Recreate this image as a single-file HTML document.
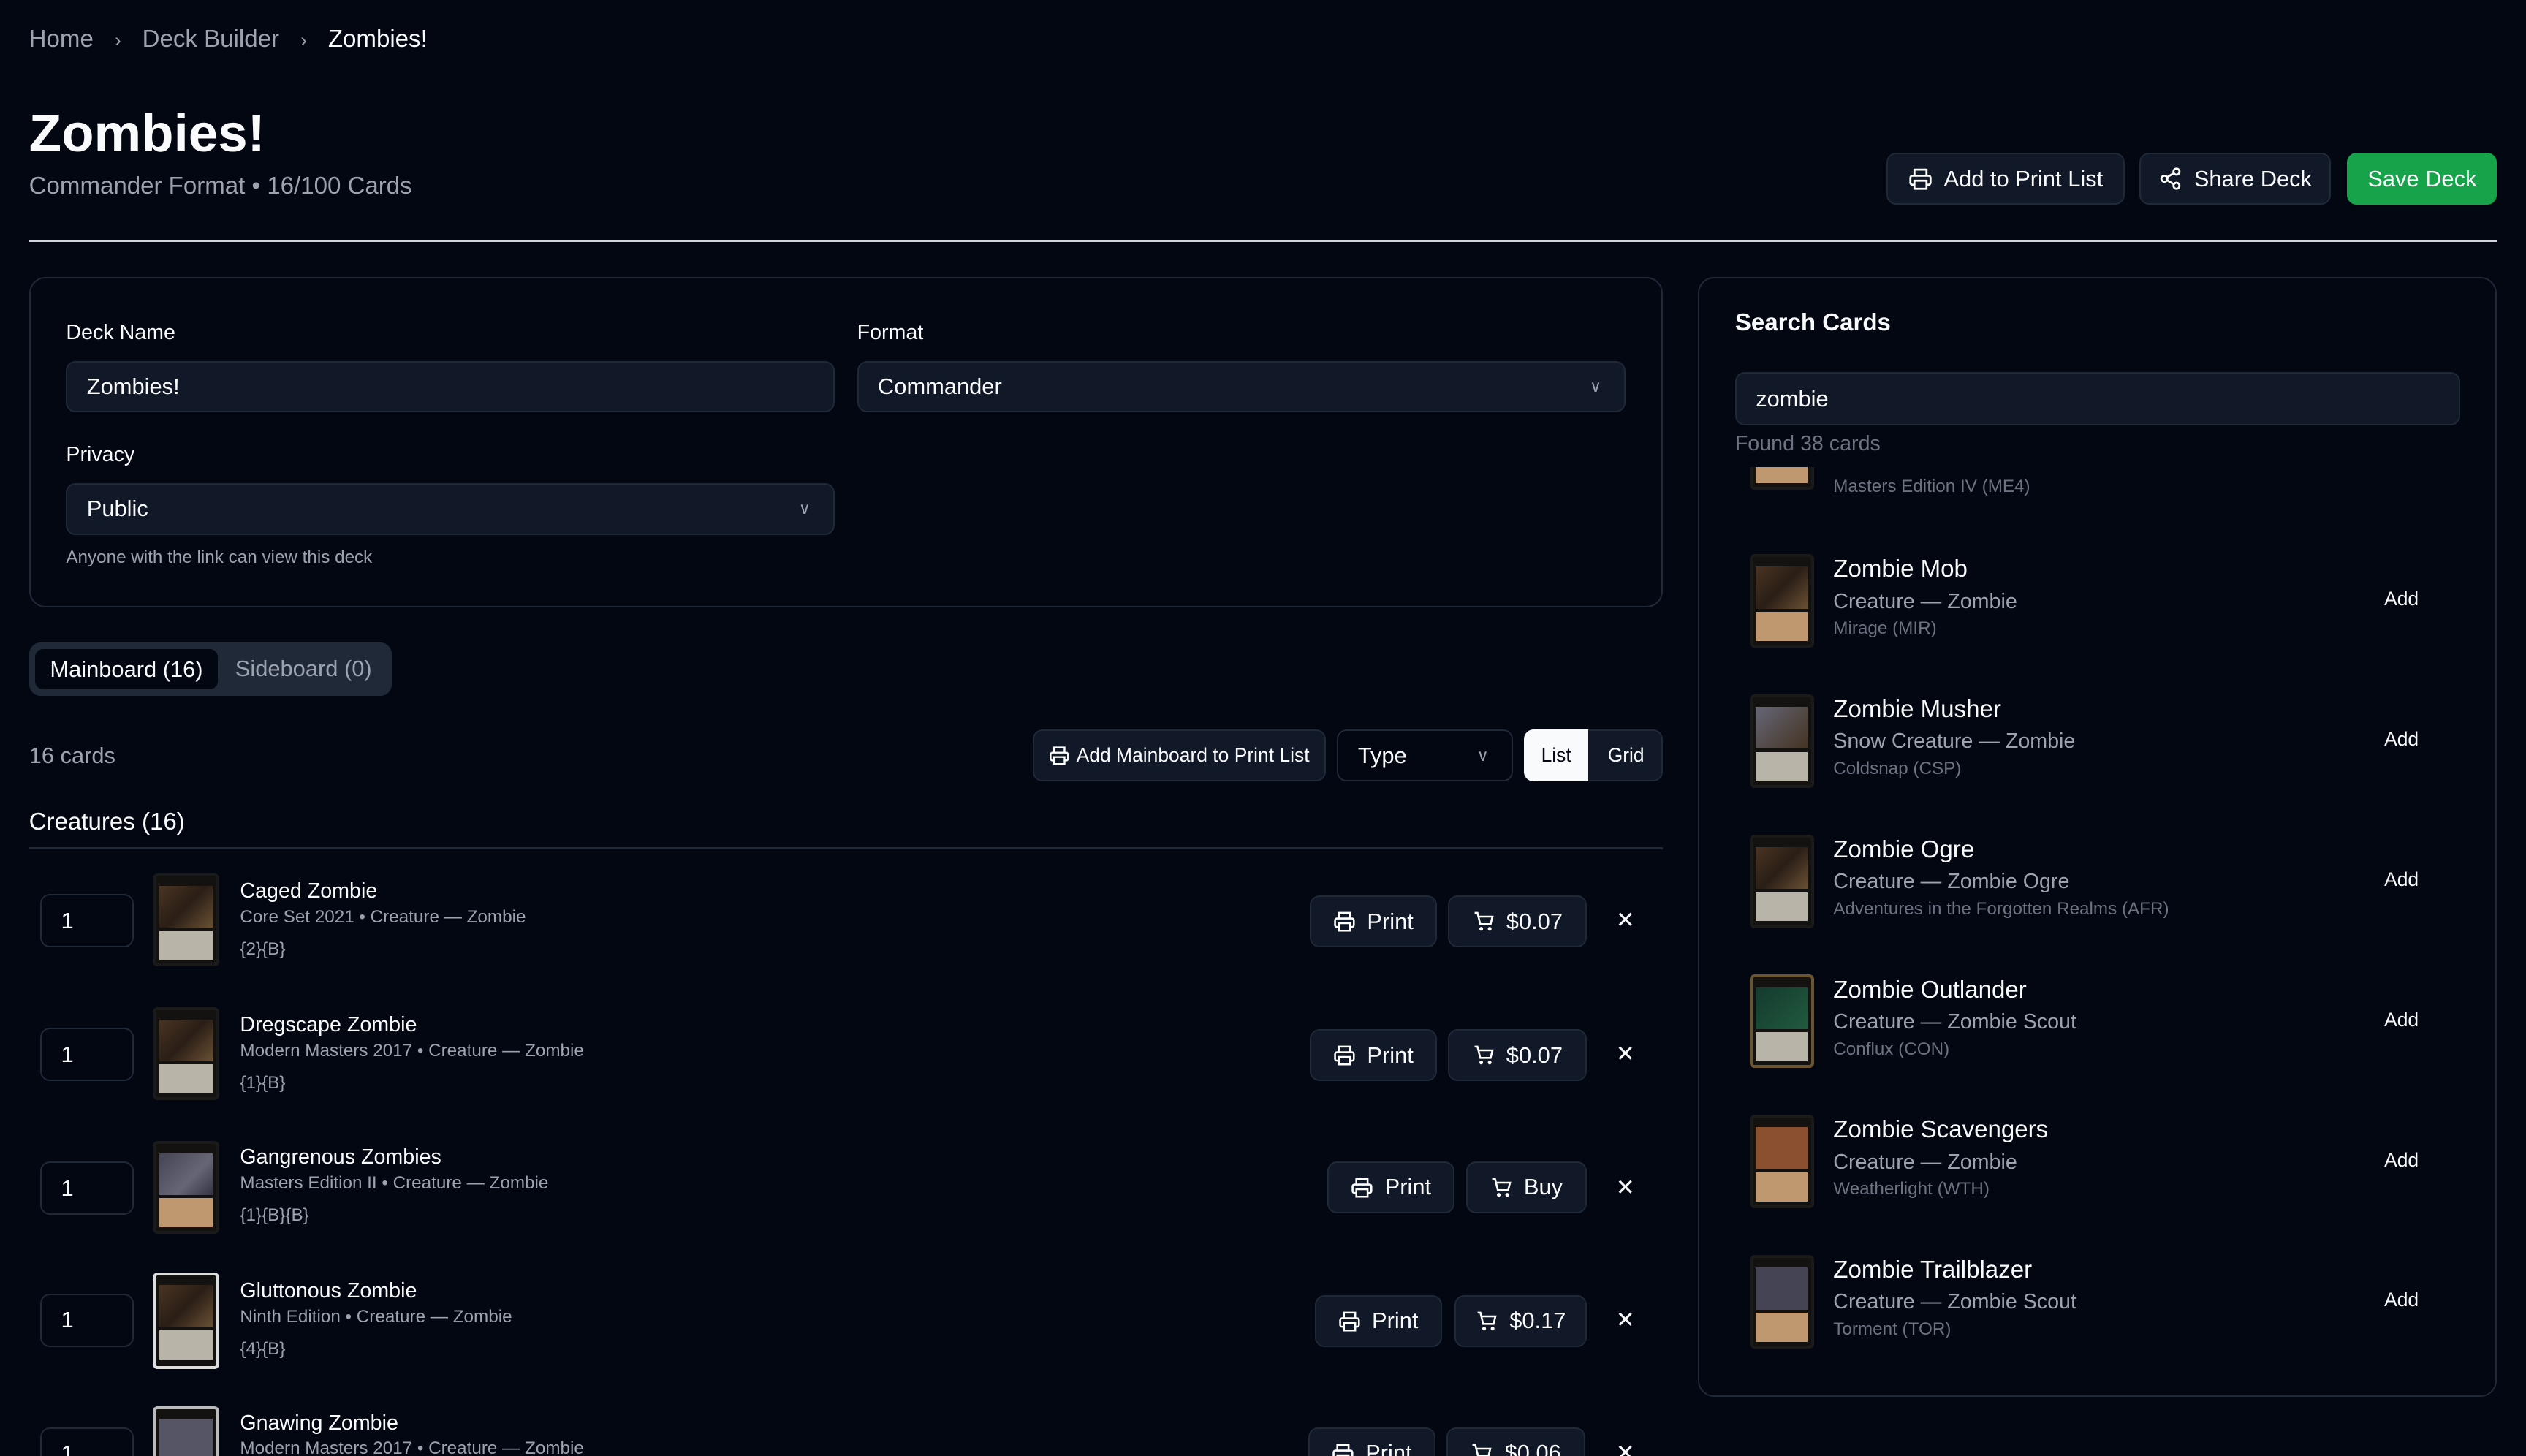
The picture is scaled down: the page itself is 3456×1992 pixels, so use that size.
<!DOCTYPE html>
<html><head><meta charset="utf-8"><style>
*{box-sizing:border-box;margin:0;padding:0}
html,body{width:3456px;height:1992px;overflow:hidden;background:#030712}
#w{zoom:2.2041;width:1568px;height:904px;position:relative;font-family:"Liberation Sans",sans-serif;color:#f9fafb;overflow:hidden}
.a{position:absolute;white-space:nowrap}
.g{color:#9ca3af}
.btn{position:absolute;background:#111827;border:1px solid #1f2937;border-radius:6px;display:flex;align-items:center;justify-content:center;gap:7px;font-size:14px;color:#f9fafb}
.inp{position:absolute;background:#111827;border:1px solid #1f2937;border-radius:6px;font-size:14px;padding-left:12px;display:flex;align-items:center}
.lbl{position:absolute;font-size:13px}
.card{position:absolute;width:41px;height:58px;border-radius:3px;background:#141210;border:2px solid #1a1a1a;overflow:hidden}
.card i{position:absolute;left:2px;right:2px;top:6px;height:26px;background:linear-gradient(135deg,#4a3422,#2a1e16 50%,#6a5034)}
.card b{position:absolute;left:2px;right:2px;top:34px;height:18px;background:#b8b4a8}
svg{flex:none}
</style></head><body><div id="w">
<div class="a g" style="left:18px;top:16px;font-size:15px">Home <span style="margin:0 9px;font-size:12px">›</span> Deck Builder <span style="margin:0 9px;font-size:12px">›</span> <span style="color:#f9fafb">Zombies!</span></div>
<div class="a" style="left:18px;top:64px;font-size:33px;font-weight:bold">Zombies!</div>
<div class="a g" style="left:18px;top:107px;font-size:15px">Commander Format • 16/100 Cards</div>
<div class="btn" style="left:1171px;top:95px;width:148px;height:32px"><svg width="15" height="15" viewBox="0 0 24 24" fill="none" stroke="#fff" stroke-width="2"><path d="M6 9V3h12v6M6 18H4a2 2 0 01-2-2v-5a2 2 0 012-2h16a2 2 0 012 2v5a2 2 0 01-2 2h-2M6 14h12v8H6z"/></svg>Add to Print List</div>
<div class="btn" style="left:1328px;top:95px;width:119px;height:32px"><svg width="15" height="15" viewBox="0 0 24 24" fill="none" stroke="#fff" stroke-width="2"><circle cx="18" cy="5" r="3"/><circle cx="6" cy="12" r="3"/><circle cx="18" cy="19" r="3"/><path d="M8.6 13.5l6.8 4M15.4 6.5l-6.8 4"/></svg>Share Deck</div>
<div class="btn" style="left:1457px;top:95px;width:93px;height:32px;background:#16a34a;border-color:#16a34a">Save Deck</div>
<div class="a" style="left:18px;top:149px;width:1532px;height:1px;background:#d1d5db"></div>

<div class="a" style="left:18px;top:172px;width:1014px;height:205px;border:1px solid #1f2937;border-radius:10px"></div>
<div class="lbl" style="left:41px;top:199px">Deck Name</div>
<div class="inp" style="left:41px;top:224px;width:477px;height:32px">Zombies!</div>
<div class="lbl" style="left:532px;top:199px">Format</div>
<div class="inp" style="left:532px;top:224px;width:477px;height:32px">Commander<span style="position:absolute;right:14px;font-size:10px;color:#9ca3af">∨</span></div>
<div class="lbl" style="left:41px;top:275px">Privacy</div>
<div class="inp" style="left:41px;top:300px;width:477px;height:32px">Public<span style="position:absolute;right:14px;font-size:10px;color:#9ca3af">∨</span></div>
<div class="a g" style="left:41px;top:340px;font-size:11px">Anyone with the link can view this deck</div>

<div class="a" style="left:18px;top:399px;width:225px;height:33px;background:#1f2937;border-radius:7px"></div>
<div class="a" style="left:22px;top:403px;width:113px;height:25px;background:#030712;border-radius:5px;font-size:14px;display:flex;align-items:center;justify-content:center">Mainboard (16)</div>
<div class="a g" style="left:146px;top:407px;font-size:14px">Sideboard (0)</div>

<div class="a g" style="left:18px;top:461px;font-size:14px">16 cards</div>
<div class="btn" style="left:641px;top:453px;width:182px;height:32px;font-size:12px;gap:4px"><svg width="13" height="13" viewBox="0 0 24 24" fill="none" stroke="#fff" stroke-width="2"><path d="M6 9V3h12v6M6 18H4a2 2 0 01-2-2v-5a2 2 0 012-2h16a2 2 0 012 2v5a2 2 0 01-2 2h-2M6 14h12v8H6z"/></svg>Add Mainboard to Print List</div>
<div class="inp" style="left:830px;top:453px;width:109px;height:32px;background:#030712">Type<span style="position:absolute;right:14px;font-size:10px;color:#9ca3af">∨</span></div>
<div class="a" style="left:946px;top:453px;width:86px;height:32px;border:1px solid #1f2937;border-radius:6px;background:#111827"></div>
<div class="a" style="left:946px;top:453px;width:40px;height:32px;background:#f9fafb;color:#030712;border-radius:6px 0 0 6px;font-size:12px;display:flex;align-items:center;justify-content:center">List</div>
<div class="a" style="left:998px;top:462px;font-size:12px">Grid</div>

<div class="a" style="left:18px;top:502px;font-size:15px">Creatures (16)</div>
<div class="a" style="left:18px;top:526px;width:1014px;height:1px;background:#1f2937"></div>

<div class="inp" style="left:25px;top:555px;width:58px;height:33px;background:#030712">1</div>
<div class="card" style="left:95px;top:542px"><i></i><b></b></div>
<div class="a" style="left:149px;top:546px;font-size:13px">Caged Zombie</div>
<div class="a g" style="left:149px;top:563px;font-size:11px">Core Set 2021 • Creature — Zombie</div>
<div class="a g" style="left:149px;top:583px;font-size:11px">{2}{B}</div>
<div class="btn" style="left:813px;top:556px;width:79px;height:32px"><svg width="14" height="14" viewBox="0 0 24 24" fill="none" stroke="#fff" stroke-width="2"><path d="M6 9V3h12v6M6 18H4a2 2 0 01-2-2v-5a2 2 0 012-2h16a2 2 0 012 2v5a2 2 0 01-2 2h-2M6 14h12v8H6z"/></svg>Print</div>
<div class="btn" style="left:899px;top:556px;width:86px;height:32px"><svg width="14" height="14" viewBox="0 0 24 24" fill="none" stroke="#fff" stroke-width="2"><path d="M2 3h3l3 12h11l2-8H6"/><circle cx="9" cy="20" r="1"/><circle cx="18" cy="20" r="1"/></svg>$0.07</div>
<div class="a" style="left:1003px;top:563px;font-size:14px">✕</div>

<div class="inp" style="left:25px;top:638px;width:58px;height:33px;background:#030712">1</div>
<div class="card" style="left:95px;top:625px"><i></i><b></b></div>
<div class="a" style="left:149px;top:629px;font-size:13px">Dregscape Zombie</div>
<div class="a g" style="left:149px;top:646px;font-size:11px">Modern Masters 2017 • Creature — Zombie</div>
<div class="a g" style="left:149px;top:666px;font-size:11px">{1}{B}</div>
<div class="btn" style="left:813px;top:639px;width:79px;height:32px"><svg width="14" height="14" viewBox="0 0 24 24" fill="none" stroke="#fff" stroke-width="2"><path d="M6 9V3h12v6M6 18H4a2 2 0 01-2-2v-5a2 2 0 012-2h16a2 2 0 012 2v5a2 2 0 01-2 2h-2M6 14h12v8H6z"/></svg>Print</div>
<div class="btn" style="left:899px;top:639px;width:86px;height:32px"><svg width="14" height="14" viewBox="0 0 24 24" fill="none" stroke="#fff" stroke-width="2"><path d="M2 3h3l3 12h11l2-8H6"/><circle cx="9" cy="20" r="1"/><circle cx="18" cy="20" r="1"/></svg>$0.07</div>
<div class="a" style="left:1003px;top:646px;font-size:14px">✕</div>

<div class="inp" style="left:25px;top:721px;width:58px;height:33px;background:#030712">1</div>
<div class="card" style="left:95px;top:708px"><i style="background:linear-gradient(135deg,#445,#667 60%,#334)"></i><b style="background:#c09870"></b></div>
<div class="a" style="left:149px;top:711px;font-size:13px">Gangrenous Zombies</div>
<div class="a g" style="left:149px;top:728px;font-size:11px">Masters Edition II • Creature — Zombie</div>
<div class="a g" style="left:149px;top:748px;font-size:11px">{1}{B}{B}</div>
<div class="btn" style="left:824px;top:721px;width:79px;height:32px"><svg width="14" height="14" viewBox="0 0 24 24" fill="none" stroke="#fff" stroke-width="2"><path d="M6 9V3h12v6M6 18H4a2 2 0 01-2-2v-5a2 2 0 012-2h16a2 2 0 012 2v5a2 2 0 01-2 2h-2M6 14h12v8H6z"/></svg>Print</div>
<div class="btn" style="left:910px;top:721px;width:75px;height:32px"><svg width="14" height="14" viewBox="0 0 24 24" fill="none" stroke="#fff" stroke-width="2"><path d="M2 3h3l3 12h11l2-8H6"/><circle cx="9" cy="20" r="1"/><circle cx="18" cy="20" r="1"/></svg>Buy</div>
<div class="a" style="left:1003px;top:729px;font-size:14px">✕</div>

<div class="inp" style="left:25px;top:803px;width:58px;height:33px;background:#030712">1</div>
<div class="card" style="left:95px;top:790px;border-color:#ddd;height:60px"><i></i><b></b></div>
<div class="a" style="left:149px;top:794px;font-size:13px">Gluttonous Zombie</div>
<div class="a g" style="left:149px;top:811px;font-size:11px">Ninth Edition • Creature — Zombie</div>
<div class="a g" style="left:149px;top:831px;font-size:11px">{4}{B}</div>
<div class="btn" style="left:816px;top:804px;width:79px;height:32px"><svg width="14" height="14" viewBox="0 0 24 24" fill="none" stroke="#fff" stroke-width="2"><path d="M6 9V3h12v6M6 18H4a2 2 0 01-2-2v-5a2 2 0 012-2h16a2 2 0 012 2v5a2 2 0 01-2 2h-2M6 14h12v8H6z"/></svg>Print</div>
<div class="btn" style="left:903px;top:804px;width:82px;height:32px"><svg width="14" height="14" viewBox="0 0 24 24" fill="none" stroke="#fff" stroke-width="2"><path d="M2 3h3l3 12h11l2-8H6"/><circle cx="9" cy="20" r="1"/><circle cx="18" cy="20" r="1"/></svg>$0.17</div>
<div class="a" style="left:1003px;top:811px;font-size:14px">✕</div>

<div class="inp" style="left:25px;top:886px;width:58px;height:33px;background:#030712">1</div>
<div class="card" style="left:95px;top:873px;border-color:#bbb"><i style="background:#556"></i><b></b></div>
<div class="a" style="left:149px;top:876px;font-size:13px">Gnawing Zombie</div>
<div class="a g" style="left:149px;top:893px;font-size:11px">Modern Masters 2017 • Creature — Zombie</div>
<div class="btn" style="left:812px;top:886px;width:79px;height:32px"><svg width="14" height="14" viewBox="0 0 24 24" fill="none" stroke="#fff" stroke-width="2"><path d="M6 9V3h12v6M6 18H4a2 2 0 01-2-2v-5a2 2 0 012-2h16a2 2 0 012 2v5a2 2 0 01-2 2h-2M6 14h12v8H6z"/></svg>Print</div>
<div class="btn" style="left:898px;top:886px;width:86px;height:32px"><svg width="14" height="14" viewBox="0 0 24 24" fill="none" stroke="#fff" stroke-width="2"><path d="M2 3h3l3 12h11l2-8H6"/><circle cx="9" cy="20" r="1"/><circle cx="18" cy="20" r="1"/></svg>$0.06</div>
<div class="a" style="left:1003px;top:894px;font-size:14px">✕</div>

<div class="a" style="left:1054px;top:172px;width:496px;height:695px;border:1px solid #1f2937;border-radius:10px"></div>
<div class="a" style="left:1077px;top:192px;font-size:15px;font-weight:bold">Search Cards</div>
<div class="inp" style="left:1077px;top:231px;width:450px;height:33px">zombie</div>
<div class="a" style="left:1077px;top:268px;font-size:13px;color:#6b7280">Found 38 cards</div>
<div class="a" style="left:1077px;top:290px;width:460px;height:560px;overflow:hidden">
 <div class="card" style="left:9px;top:-44px;width:40px"><i></i><b style="background:#c09870"></b></div>
 <div class="a" style="left:61px;top:6px;font-size:11px;color:#6b7280">Masters Edition IV (ME4)</div>
</div>
<div class="card" style="left:1086px;top:344px;width:40px"><i></i><b style="background:#c09870"></b></div>
<div class="a" style="left:1138px;top:345px;font-size:15px">Zombie Mob</div><div class="a g" style="left:1138px;top:366px;font-size:13px">Creature — Zombie</div><div class="a" style="left:1138px;top:384px;font-size:11px;color:#6b7280">Mirage (MIR)</div><div class="a" style="left:1480px;top:365px;font-size:12px">Add</div>
<div class="card" style="left:1086px;top:431px;width:40px"><i style="background:linear-gradient(135deg,#667,#432)"></i><b></b></div>
<div class="a" style="left:1138px;top:432px;font-size:15px">Zombie Musher</div><div class="a g" style="left:1138px;top:453px;font-size:13px">Snow Creature — Zombie</div><div class="a" style="left:1138px;top:471px;font-size:11px;color:#6b7280">Coldsnap (CSP)</div><div class="a" style="left:1480px;top:452px;font-size:12px">Add</div>
<div class="card" style="left:1086px;top:518px;width:40px"><i></i><b></b></div>
<div class="a" style="left:1138px;top:519px;font-size:15px">Zombie Ogre</div><div class="a g" style="left:1138px;top:540px;font-size:13px">Creature — Zombie Ogre</div><div class="a" style="left:1138px;top:558px;font-size:11px;color:#6b7280">Adventures in the Forgotten Realms (AFR)</div><div class="a" style="left:1480px;top:539px;font-size:12px">Add</div>
<div class="card" style="left:1086px;top:605px;width:40px;border-color:#6a5530"><i style="background:linear-gradient(135deg,#143a2e,#215a3e)"></i><b></b></div>
<div class="a" style="left:1138px;top:606px;font-size:15px">Zombie Outlander</div><div class="a g" style="left:1138px;top:627px;font-size:13px">Creature — Zombie Scout</div><div class="a" style="left:1138px;top:645px;font-size:11px;color:#6b7280">Conflux (CON)</div><div class="a" style="left:1480px;top:626px;font-size:12px">Add</div>
<div class="card" style="left:1086px;top:692px;width:40px"><i style="background:#8a5030"></i><b style="background:#c09870"></b></div>
<div class="a" style="left:1138px;top:693px;font-size:15px">Zombie Scavengers</div><div class="a g" style="left:1138px;top:714px;font-size:13px">Creature — Zombie</div><div class="a" style="left:1138px;top:732px;font-size:11px;color:#6b7280">Weatherlight (WTH)</div><div class="a" style="left:1480px;top:713px;font-size:12px">Add</div>
<div class="card" style="left:1086px;top:779px;width:40px"><i style="background:#445"></i><b style="background:#c09870"></b></div>
<div class="a" style="left:1138px;top:780px;font-size:15px">Zombie Trailblazer</div><div class="a g" style="left:1138px;top:801px;font-size:13px">Creature — Zombie Scout</div><div class="a" style="left:1138px;top:819px;font-size:11px;color:#6b7280">Torment (TOR)</div><div class="a" style="left:1480px;top:800px;font-size:12px">Add</div>
</div></body></html>
